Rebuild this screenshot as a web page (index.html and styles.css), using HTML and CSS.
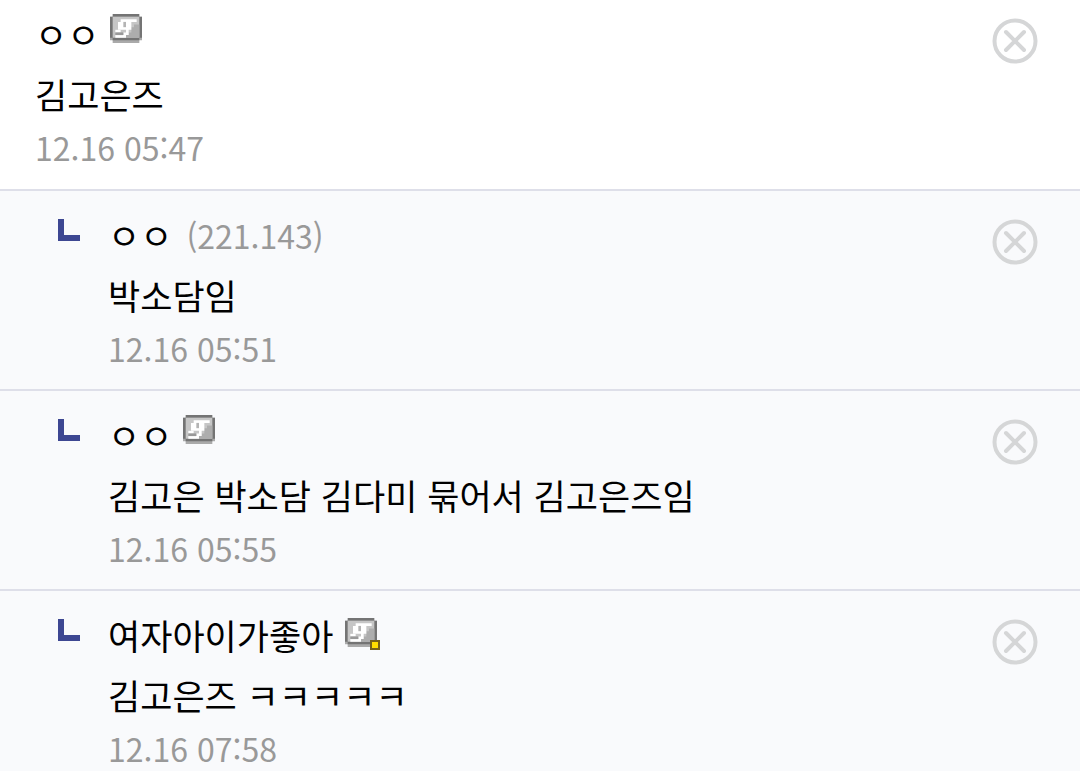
FILE: index.html
```html
<!DOCTYPE html>
<html lang="ko">

<head>
    <meta charset="UTF-8">
    <meta name="viewport" content="width=device-width, initial-scale=1.0">
    <title>댓글</title>
    <link rel="stylesheet" href="styles.css">
</head>

<body>

    <!-- shared icons -->
    <svg class="sprite" aria-hidden="true">
        <symbol id="gonick" viewBox="0 0 12 11" preserveAspectRatio="none">
            <path fill="#aaa" d="M0 1h12v9h-1v1H1v-1H0z"/>
            <path fill="#747474" d="M1 0h10v1h1v8h-1v1H1V9H0V1h1z"/>
            <path fill="#c6c6c6" d="M1 1h10v8H1z"/>
            <path fill="#adadad" d="M9 4h2v5H6V8h1V7h1V5h1z"/>
            <path fill="#fff" d="M4 2h6v1H8v3H7v2H6v1H2V8h3V7h1V6H3V3h1z"/>
            <path fill="#b4b4b4" d="M5 3h1v2H5z"/>
            <path fill="#fff" d="M2 6h2v1H2z"/>
            <path fill="#999" d="M2 7h3v1H2z"/>
        </symbol>
        <symbol id="close" viewBox="0 0 46 46">
            <g fill="none" stroke="#d5d6d7" stroke-width="4">
                <circle cx="23" cy="23" r="20.5"/>
                <path d="M14 14l18 18M32 14L14 32" stroke-linecap="round"/>
            </g>
        </symbol>
    </svg>

    <ul class="comment-list">
        <li class="comment">
            <div class="comment-body">
                <div class="nick">ㅇㅇ <svg class="nick-icon"><use href="#gonick"/></svg></div>
                <p class="text">김고은즈</p>
                <span class="date">12.16 05:47</span>
            </div>
            <button class="btn-del" aria-label="삭제"><svg><use href="#close"/></svg></button>
        </li>
        <li class="comment reply">
            <span class="reply-mark"></span>
            <div class="comment-body">
                <div class="nick">ㅇㅇ <span class="ip">(221.143)</span></div>
                <p class="text">박소담임</p>
                <span class="date">12.16 05:51</span>
            </div>
            <button class="btn-del" aria-label="삭제"><svg><use href="#close"/></svg></button>
        </li>
        <li class="comment reply">
            <span class="reply-mark"></span>
            <div class="comment-body">
                <div class="nick">ㅇㅇ <svg class="nick-icon"><use href="#gonick"/></svg></div>
                <p class="text">김고은 박소담 김다미 묶어서 김고은즈임</p>
                <span class="date">12.16 05:55</span>
            </div>
            <button class="btn-del" aria-label="삭제"><svg><use href="#close"/></svg></button>
        </li>
        <li class="comment reply">
            <span class="reply-mark"></span>
            <div class="comment-body">
                <div class="nick">여자아이가좋아 <span class="fixed-icon"><svg class="nick-icon"><use href="#gonick"/></svg></span></div>
                <p class="text">김고은즈 ㅋㅋㅋㅋㅋ</p>
                <span class="date">12.16 07:58</span>
            </div>
            <button class="btn-del" aria-label="삭제"><svg><use href="#close"/></svg></button>
        </li>
    </ul>

</body>

</html>
```

FILE: styles.css
```css
html {
    scrollbar-width: none;
}

body {
    margin: 0;
    background: #fff;
    color: #000;
    font-family: "Noto Sans CJK KR", sans-serif;
    font-size: 35px;
}

.sprite {
    display: none;
}

.comment-list {
    list-style: none;
    margin: 0;
    padding: 0;
}

.comment {
    display: flex;
    align-items: flex-start;
    padding: 4px 42px 19px 35px;
    border-bottom: 2px solid #dedfe9;
}

.reply {
    padding-top: 14px;
    padding-bottom: 18px;
    padding-left: 58px;
    background: #f9fafc;
}

/* ㄴ shaped mark in front of a reply */
.reply-mark {
    box-sizing: border-box;
    width: 22px;
    height: 22px;
    margin: 14px 28px 0 0;
    border-left: 6px solid #3d4792;
    border-bottom: 6px solid #3d4792;
}

.comment-body {
    flex: 1;
    min-width: 0;
}

.nick {
    display: flex;
    align-items: center;
    height: 60px;
    line-height: 60px;
}

.nick-icon {
    display: block;
    width: 32px;
    height: 29px;
}

.nick > .nick-icon {
    margin: 0 0 12px 11px;
}

.ip {
    margin-left: 14px;
    color: #999;
    font-size: 32px;
}

/* fixed nickname gets a yellow dot on its icon */
.fixed-icon {
    position: relative;
    margin: 0 0 6px 12px;
}

.fixed-icon::after {
    content: "";
    position: absolute;
    right: -3px;
    bottom: -3px;
    width: 6px;
    height: 6px;
    background: #fd0;
    border: 2px solid #75601a;
}

.text {
    margin: 0;
    line-height: 60px;
}

.date {
    display: block;
    color: #999;
    font-size: 32px;
    line-height: 46px;
}

.btn-del {
    margin-top: 14px;
    padding: 0;
    border: 0;
    background: none;
    cursor: pointer;
}

.btn-del svg {
    display: block;
    width: 46px;
    height: 46px;
}
```
